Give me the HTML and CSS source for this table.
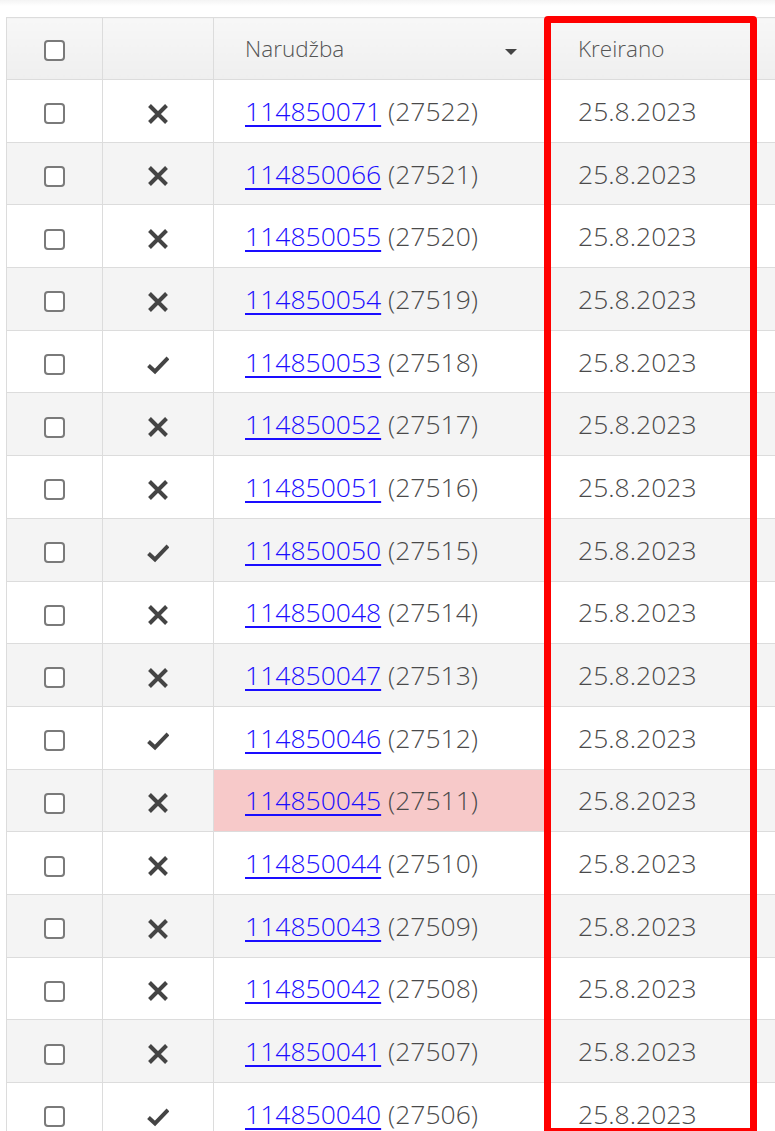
FILE: index.html
```html
<!DOCTYPE html>
<html>
<head>
<meta charset="utf-8">
<link rel="stylesheet" href="styles.css">
</head>
<body>
<div class="topbar"></div>
<div class="wrap">
<table class="grid">
<thead>
<tr>
<th class="c1"><span class="cb"></span></th>
<th class="c2"></th>
<th class="c3"><div class="hd"><span>Narudžba</span><span class="caret"></span></div></th>
<th class="c4">Kreirano</th>
</tr>
</thead>
<tbody id="rows">
<tr><td class="c1"><span class="cb"></span></td><td class="c2"><svg class="ic" viewBox="0 0 22 22"><path d="M2.5 2.5 L19.5 19.5 M19.5 2.5 L2.5 19.5"/></svg></td><td class="c3"><a href="#">114850071</a> (27522)</td><td class="c4">25.8.2023</td></tr>
<tr><td class="c1"><span class="cb"></span></td><td class="c2"><svg class="ic" viewBox="0 0 22 22"><path d="M2.5 2.5 L19.5 19.5 M19.5 2.5 L2.5 19.5"/></svg></td><td class="c3"><a href="#">114850066</a> (27521)</td><td class="c4">25.8.2023</td></tr>
<tr><td class="c1"><span class="cb"></span></td><td class="c2"><svg class="ic" viewBox="0 0 22 22"><path d="M2.5 2.5 L19.5 19.5 M19.5 2.5 L2.5 19.5"/></svg></td><td class="c3"><a href="#">114850055</a> (27520)</td><td class="c4">25.8.2023</td></tr>
<tr><td class="c1"><span class="cb"></span></td><td class="c2"><svg class="ic" viewBox="0 0 22 22"><path d="M2.5 2.5 L19.5 19.5 M19.5 2.5 L2.5 19.5"/></svg></td><td class="c3"><a href="#">114850054</a> (27519)</td><td class="c4">25.8.2023</td></tr>
<tr><td class="c1"><span class="cb"></span></td><td class="c2"><svg class="ic" viewBox="0 0 22 22"><path d="M1.5 11.5 L8 17.5 L21 4"/></svg></td><td class="c3"><a href="#">114850053</a> (27518)</td><td class="c4">25.8.2023</td></tr>
<tr><td class="c1"><span class="cb"></span></td><td class="c2"><svg class="ic" viewBox="0 0 22 22"><path d="M2.5 2.5 L19.5 19.5 M19.5 2.5 L2.5 19.5"/></svg></td><td class="c3"><a href="#">114850052</a> (27517)</td><td class="c4">25.8.2023</td></tr>
<tr><td class="c1"><span class="cb"></span></td><td class="c2"><svg class="ic" viewBox="0 0 22 22"><path d="M2.5 2.5 L19.5 19.5 M19.5 2.5 L2.5 19.5"/></svg></td><td class="c3"><a href="#">114850051</a> (27516)</td><td class="c4">25.8.2023</td></tr>
<tr><td class="c1"><span class="cb"></span></td><td class="c2"><svg class="ic" viewBox="0 0 22 22"><path d="M1.5 11.5 L8 17.5 L21 4"/></svg></td><td class="c3"><a href="#">114850050</a> (27515)</td><td class="c4">25.8.2023</td></tr>
<tr><td class="c1"><span class="cb"></span></td><td class="c2"><svg class="ic" viewBox="0 0 22 22"><path d="M2.5 2.5 L19.5 19.5 M19.5 2.5 L2.5 19.5"/></svg></td><td class="c3"><a href="#">114850048</a> (27514)</td><td class="c4">25.8.2023</td></tr>
<tr><td class="c1"><span class="cb"></span></td><td class="c2"><svg class="ic" viewBox="0 0 22 22"><path d="M2.5 2.5 L19.5 19.5 M19.5 2.5 L2.5 19.5"/></svg></td><td class="c3"><a href="#">114850047</a> (27513)</td><td class="c4">25.8.2023</td></tr>
<tr><td class="c1"><span class="cb"></span></td><td class="c2"><svg class="ic" viewBox="0 0 22 22"><path d="M1.5 11.5 L8 17.5 L21 4"/></svg></td><td class="c3"><a href="#">114850046</a> (27512)</td><td class="c4">25.8.2023</td></tr>
<tr><td class="c1"><span class="cb"></span></td><td class="c2"><svg class="ic" viewBox="0 0 22 22"><path d="M2.5 2.5 L19.5 19.5 M19.5 2.5 L2.5 19.5"/></svg></td><td class="c3 hl"><a href="#">114850045</a> (27511)</td><td class="c4">25.8.2023</td></tr>
<tr><td class="c1"><span class="cb"></span></td><td class="c2"><svg class="ic" viewBox="0 0 22 22"><path d="M2.5 2.5 L19.5 19.5 M19.5 2.5 L2.5 19.5"/></svg></td><td class="c3"><a href="#">114850044</a> (27510)</td><td class="c4">25.8.2023</td></tr>
<tr><td class="c1"><span class="cb"></span></td><td class="c2"><svg class="ic" viewBox="0 0 22 22"><path d="M2.5 2.5 L19.5 19.5 M19.5 2.5 L2.5 19.5"/></svg></td><td class="c3"><a href="#">114850043</a> (27509)</td><td class="c4">25.8.2023</td></tr>
<tr><td class="c1"><span class="cb"></span></td><td class="c2"><svg class="ic" viewBox="0 0 22 22"><path d="M2.5 2.5 L19.5 19.5 M19.5 2.5 L2.5 19.5"/></svg></td><td class="c3"><a href="#">114850042</a> (27508)</td><td class="c4">25.8.2023</td></tr>
<tr><td class="c1"><span class="cb"></span></td><td class="c2"><svg class="ic" viewBox="0 0 22 22"><path d="M2.5 2.5 L19.5 19.5 M19.5 2.5 L2.5 19.5"/></svg></td><td class="c3"><a href="#">114850041</a> (27507)</td><td class="c4">25.8.2023</td></tr>
<tr><td class="c1"><span class="cb"></span></td><td class="c2"><svg class="ic" viewBox="0 0 22 22"><path d="M1.5 11.5 L8 17.5 L21 4"/></svg></td><td class="c3"><a href="#">114850040</a> (27506)</td><td class="c4">25.8.2023</td></tr>
</tbody>
</table>
<div class="mark"></div>
</div>
</body>
</html>
```

FILE: styles.css
```css
html, body {
  margin: 0;
  padding: 0;
  background: #fff;
  overflow: hidden;
}
body {
  font-family: "Open Sans", "Liberation Sans", sans-serif;
  color: #555;
  height: 1131px;
}
.topbar {
  height: 6px;
  background: linear-gradient(to bottom, #f4f4f4, #fff);
}
.wrap {
  position: relative;
  padding: 11px 0 0 6px;
  width: 900px;
}
.grid {
  border-collapse: collapse;
  table-layout: fixed;
  width: 840px;
}
.grid th, .grid td {
  border: 1px solid #dcdcdc;
  padding: 0;
  vertical-align: middle;
  box-sizing: border-box;
}
.grid thead th {
  height: 62px;
  background: linear-gradient(to bottom, #f7f7f7, #efefef);
  font-weight: 300;
  font-size: 22.5px;
  color: #555;
  text-align: left;
}
.grid tbody td {
  height: 62.69px;
  font-size: 26.5px;
  font-weight: 300;
  color: #4a4a4a;
}
.grid tbody tr:nth-child(even) td {
  background: #f4f4f4;
}
.grid tbody tr:nth-child(odd) td {
  background: #fff;
}
.grid tbody tr td.hl {
  background: #f7c9c9;
}
.c1 {
  width: 96px;
  text-align: center !important;
  position: sticky;
  left: 0;
  z-index: 2;
  box-shadow: 3px 0 4px -2px rgba(0,0,0,0.12);
}
.c2 {
  width: 111px;
  text-align: center;
}
.c3 {
  width: 332px;
  padding-left: 31px !important;
}
.c4 {
  width: 301px;
  padding-left: 32px !important;
}
.hd {
  display: flex;
  align-items: center;
  justify-content: space-between;
  padding-right: 28px;
}
.caret {
  width: 0;
  height: 0;
  border-left: 6px solid transparent;
  border-right: 6px solid transparent;
  border-top: 6px solid #444;
  margin-top: 6px;
}
.cb {
  display: inline-block;
  width: 17px;
  height: 17px;
  border: 2px solid #7a7a7a;
  border-radius: 4px;
  vertical-align: middle;
  background: #fff;
}
.ic {
  width: 22px;
  height: 22px;
  vertical-align: middle;
  fill: none;
  stroke: #444;
  stroke-width: 4;
  stroke-linecap: butt;
  stroke-linejoin: miter;
}
a {
  color: #1a0dff;
  text-decoration: underline;
  text-decoration-thickness: 2px;
  text-underline-offset: 4px;
}
.mark {
  position: absolute;
  left: 544px;
  top: 10px;
  width: 199px;
  height: 1105px;
  border: 7px solid #ff0000;
  border-radius: 4px;
  pointer-events: none;
}
```
